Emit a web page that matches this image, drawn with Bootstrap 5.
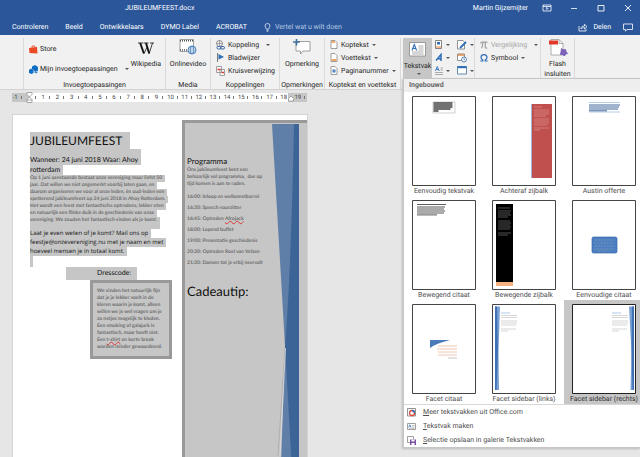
<!DOCTYPE html>
<html lang="nl">
<head>
<meta charset="utf-8">
<meta name="viewport" content="width=device-width, initial-scale=1">
<title>JUBILEUMFEEST.docx</title>
<link href="https://cdn.jsdelivr.net/npm/bootstrap@5.3.0/dist/css/bootstrap.min.css" rel="stylesheet">
<style>
  body { font-family: Roboto, "Noto Sans", sans-serif; font-size: 7px; line-height: 10px; color: #262626; background: #e6e6e6; text-rendering: geometricPrecision; }
  button { font: inherit; color: inherit; background: none; border: 0; padding: 0; line-height: 10px; text-rendering: inherit; }
  svg { display: block; flex: none; }
  .app-head { background: #2b579a; color: #fff; }
  .title-row { height: 16px; padding-right: 7px; }
  .doc-title { padding-left: 125px; }
  .user-name { margin-right: 14px; }
  .win-buttons { gap: 17px; }
  .tab-row { height: 19px; padding: 3px 7px 0 12px; }
  .tab-row a { color: #fff; text-decoration: none; }
  .tab-list { gap: 17px; }
  .tab-list a.tell { color: #b5c7e3; gap: 4px; }
  .share { gap: 5px; }
  .share-side { gap: 12px; }

  .ribbon { background: #f1f1f1; border-bottom: 1px solid #d2d2d2; height: 55px; padding-top: 3px; }
  .rgroup { border-right: 1px solid #dadada; flex: none; height: 51px; }
  .rbody { height: 42px; }
  .rlabel { display: flex; justify-content: center; height: 9px; white-space: nowrap; }
  .g-lead { width: 24px; } .g-apps { width: 142px; } .g-media { width: 45px; } .g-links { width: 69px; }
  .g-note { width: 45px; } .g-head { width: 76px; } .g-text { width: 74px; } .g-sym { width: 66px; } .g-flash { width: 34px; }
  .g-text { padding-left: 2px; } .g-text, .g-sym, .g-flash { height: 40px; }
  .rrow { height: 13px; gap: 3px; white-space: nowrap; }
  .rstack { padding-left: 5px; }
  .rapp { height: 18px; gap: 2px; white-space: nowrap; }
  .rbig { gap: 4px; }
  .rbig-flash { gap: 3px; }
  .caret::after { content: ""; display: inline-block; border: 2px solid transparent; border-top-color: #555; border-bottom: 0; margin-left: 3px; vertical-align: 1px; }
  .caret-far::after { margin-left: 7px; }
  .off { color: #a6a6a6; }
  .btn-open { background: #c6c6c6; width: 29px; height: 40px; }
  .tool-grid { padding-left: 3px; }

  .gallery.dropdown-menu { --bs-dropdown-min-width: 238px; --bs-dropdown-padding-y: 0; top: 40px; left: 2px; width: 238px; font-size: 7px; border: 1px solid #c6c6c6; border-radius: 0; color: #505050; background: #fff; box-shadow: -1px 1px 2px #bbb; }
  .gal-head { background: #eee; height: 13px; line-height: 13px; padding-left: 5px; font-size: 7px; font-weight: 700; margin: 0; color: #666; }
  .gal-grid { display: grid; grid-template-columns: 80px 80px 80px; }
  .gal-item { height: 104px; padding-top: 3px; }
  .gal-item.picked { background: #c6c6c6; color: #333; }
  .gal-item .label { display: block; line-height: 10px; white-space: nowrap; }
  .gal-item svg { margin: 0 auto; }
  .gal-foot { border-top: 1px solid #d9d9d9; background: #fff; }
  .gal-foot button { height: 14px; gap: 7px; padding-left: 3px; }
  .gal-foot u { text-underline-offset: 1px; }

  .work { padding-top: 2px; }
  .ruler { margin-left: 11px; width: 297px; height: 11px; font-size: 6px; line-height: 9px; color: #444; background: linear-gradient(#fff, #fff) 19px 1px / 258px 9px no-repeat, linear-gradient(#c6c6c6, #c6c6c6) 1px 1px / 295px 9px no-repeat; }
  .ruler span { flex: 1 0 14px; display: flex; align-items: center; }
  .ruler b { flex: none; width: 8px; font-weight: 400; display: flex; justify-content: center; }
  .ruler i { flex: none; width: 6px; height: 3px; background: linear-gradient(#777, #777) 2px 0 / 1px 3px no-repeat; }
  .ruler svg { margin: auto; }

  .sheet { margin: 11px 0 0 12px; width: 296px; background: #fff; border: 1px solid #d4d4d4; border-bottom: 0; color: #111; font-family: Lato, "Open Sans", sans-serif; }
  .sheet p, .sheet h1, .sheet h2 { margin: 0; white-space: nowrap; }
  .flow { width: 169px; padding: 17px 0 0 17px; flex: none; }
  .hl { display: block; width: fit-content; background: #c6c6c6; padding-right: 3px; }
  .flow h1 { font-size: 12px; font-weight: 400; line-height: 17px; }
  .flow h1 .hl { padding-right: 8px; }
  .sub { font-size: 7px; line-height: 10px; }
  .sub .first { padding-top: 6px; }
  .fine { font-size: 5px; line-height: 7px; font-weight: 700; color: #6b6b6b; }
  .flow .fine .hl:last-child { padding-bottom: 5px; }
  .ask { font-family: "Open Sans", sans-serif; font-size: 6px; line-height: 9px; }
  .flow .blank { height: 11px; width: 3px; padding: 0; }
  .flow .dress { margin-left: 36px; width: 71px; padding-left: 31px; font-size: 7px; line-height: 13px; }
  .framed { margin-left: 60px; width: 82px; border: 3px solid #999; background: #c6c6c6; padding: 5px 4px; }
  .side { border: 3px solid #999; border-right: 0; border-bottom: 0; background: #c6c6c6; margin-top: 5px; position: relative; }
  .side-text { padding: 33px 0 0 2px; position: relative; }
  .side h2 { font-size: 8px; font-weight: 400; line-height: 11px; }
  .side .slot { line-height: 11px; }
  .side .tip { font-size: 13px; line-height: 18px; margin-top: 13px; font-weight: 400; }
  .side-art { position: absolute; top: 1px; right: 8px; }
  .typo { text-decoration: underline wavy #d33 1px; text-decoration-skip-ink: none; text-underline-offset: 0; }
</style>
</head>
<body>
<div class="vh-100 d-flex flex-column overflow-hidden">
  <header class="app-head">
    <div class="title-row d-flex align-items-center justify-content-between">
      <div class="doc-title">JUBILEUMFEEST.docx</div>
      <div class="d-flex align-items-center">
        <span class="user-name">Martin Gijzemijter</span>
        <div class="win-buttons d-flex align-items-center">
          <button aria-label="Lint weergeven"><svg width="10" height="8" fill="none" stroke="#fff" stroke-width=".8"><path d="M1 1h8v6H1zM1 2.5h8M5 6V3.6M3.8 4.7L5 3.5l1.200 1.200"/></svg></button>
          <button aria-label="Minimaliseren"><svg width="10" height="8" stroke="#fff" stroke-width=".8"><path d="M2 4.500h6"/></svg></button>
          <button aria-label="Maximaliseren"><svg width="10" height="8" fill="none" stroke="#fff" stroke-width=".9"><path d="M2 1.500h6v5.500H2z"/></svg></button>
          <button aria-label="Sluiten"><svg width="10" height="8" stroke="#fff" stroke-width=".9"><path d="M2 1l6 6M8 1L2 7"/></svg></button>
        </div>
      </div>
    </div>
    <nav class="tab-row d-flex align-items-center justify-content-between">
      <div class="tab-list d-flex align-items-center">
        <a href="#">Controleren</a><a href="#">Beeld</a><a href="#">Ontwikkelaars</a><a href="#">DYMO Label</a><a href="#">ACROBAT</a>
        <a href="#" class="tell d-flex align-items-center"><svg width="7" height="9" fill="none" stroke="#dde6f4" stroke-width=".8"><path d="M2.300 6C2.300 4.800 1 4.400 1 3a2.500 2.500 0 0 1 5 0C6 4.400 4.700 4.800 4.700 6zM2.300 7.200h2.400M2.800 8.400h1.400"/></svg>Vertel wat u wilt doen</a>
      </div>
      <div class="share-side d-flex align-items-center">
        <a href="#" class="share d-flex align-items-center"><svg width="10" height="9" fill="none" stroke="#fff" stroke-width=".8"><path d="M1 3v5h7V6M3 6c0-2 1-3 3.500-3V1.300L9 3.700 6.500 6V4.600C5 4.600 4 5 3 6z"/></svg>Delen</a>
        <button aria-label="Opmerkingen"><svg width="10" height="9" fill="none" stroke="#fff" stroke-width=".8"><path d="M.5 1h9v5.500H4L2.500 8.200V6.500h-2z"/></svg></button>
      </div>
    </nav>
  </header>

  <section class="ribbon d-flex">
    <div class="rgroup g-lead"></div>
    <div class="rgroup g-apps">
      <div class="rbody d-flex justify-content-between pe-1">
        <div class="rstack pt-1">
          <button class="rapp d-flex align-items-center pb-1"><svg width="9" height="9"><path d="M0 3l8-1 .5 6.500L.500 8z" fill="#eb4a25"/><path d="M3 3V1.500Q4.500 0 6 1.500V3" fill="none" stroke="#eb4a25"/></svg>Store</button>
          <button class="rapp d-flex align-items-center"><svg width="9" height="9"><path d="M3 1.500L6 0l3 2v3.500L6.500 7 5 5.500 3 4z" fill="#0f6fc6"/><path d="M0 5l2-1.500L4.500 5v3L2.500 9 0 8z" fill="#0f6fc6"/><path d="M5.500 7l1.500 1 1.500-1" stroke="#0f6fc6" fill="none"/></svg><span class="caret caret-far">Mijn invoegtoepassingen</span></button>
        </div>
        <button class="rbig d-flex flex-column align-items-center pt-1"><svg width="16" height="13" fill="none" stroke="#111"><path d="M0 1h5M5.500 1h5M12 1h4" stroke-width=".8"/><path d="M2.200 1l3.700 10.500M8 1l3.200 10.500" stroke-width="1.900"/><path d="M6 11.500L9 5M11.200 11.500L14.500 1" stroke-width=".8"/></svg>Wikipedia</button>
      </div>
      <div class="rlabel">Invoegtoepassingen</div>
    </div>
    <div class="rgroup g-media">
      <div class="rbody d-flex justify-content-center">
        <button class="rbig d-flex flex-column align-items-center"><svg width="18" height="17"><path d="M1 1.500h13.500v12H1z" fill="#fff" stroke="#888" stroke-width=".8"/><path d="M1 2.800h13.500M1 12h8" stroke="#555" stroke-width="1.500" stroke-dasharray="1 1"/><circle cx="13" cy="12" r="4" fill="#fff" stroke="#3b78b8" stroke-width=".9"/><ellipse cx="13" cy="12" rx="1.700" ry="4" fill="none" stroke="#3b78b8" stroke-width=".7"/><path d="M9 12h8M9.600 10h6.800M9.600 14h6.800" stroke="#3b78b8" stroke-width=".6"/></svg>Onlinevideo</button>
      </div>
      <div class="rlabel">Media</div>
    </div>
    <div class="rgroup g-links">
      <div class="rbody rstack">
        <button class="rrow d-flex align-items-center"><svg width="9" height="10" fill="none"><circle cx="3.500" cy="3.500" r="3" stroke="#777" stroke-width=".8"/><path d="M.5 3.500h6M3.500.5v6" stroke="#777" stroke-width=".6"/><rect x="1" y="6.500" width="4" height="2.500" rx="1.200" stroke="#2f5f9f" fill="#fff"/><rect x="4.500" y="6.500" width="4" height="2.500" rx="1.200" stroke="#2f5f9f"/></svg><span class="caret caret-far">Koppeling</span></button>
        <button class="rrow d-flex align-items-center"><svg width="9" height="9"><path d="M1.500 0v9" stroke="#777"/><path d="M2.500 1L8 4 2.500 6.500z" fill="#2f6db5"/></svg>Bladwijzer</button>
        <button class="rrow d-flex align-items-center"><svg width="9" height="10" fill="#fff" stroke="#888" stroke-width=".8"><path d="M.5.5h5v6h-5zM4 3.500h4.500v6H4z"/><path d="M1.500 3.500h3M5.500 6.500H8" stroke="#d8412f" stroke-width="1.500"/></svg>Kruisverwijzing</button>
      </div>
      <div class="rlabel">Koppelingen</div>
    </div>
    <div class="rgroup g-note">
      <div class="rbody d-flex justify-content-center">
        <button class="rbig d-flex flex-column align-items-center"><svg width="18" height="17"><path d="M3 3.500h14v9.500h-7L7.500 16v-3H3z" fill="#fff" stroke="#8a8a8a" stroke-width=".8"/><path d="M3.500 1v6.500M0 4h7" stroke="#41719c" stroke-width="1.600"/></svg>Opmerking</button>
      </div>
      <div class="rlabel">Opmerkingen</div>
    </div>
    <div class="rgroup g-head">
      <div class="rbody rstack">
        <button class="rrow d-flex align-items-center"><svg width="8" height="9"><path d="M1 .5h4l2 2v6H1z" fill="#fff" stroke="#888" stroke-width=".8"/><path d="M1.500 1h3.500v2H1.500z" fill="#f0a868"/></svg><span class="caret">Koptekst</span></button>
        <button class="rrow d-flex align-items-center"><svg width="8" height="9"><path d="M1 .5h4l2 2v6H1z" fill="#fff" stroke="#888" stroke-width=".8"/><path d="M1.500 6h5v2h-5z" fill="#f0a868"/></svg><span class="caret">Voettekst</span></button>
        <button class="rrow d-flex align-items-center"><svg width="8" height="9"><path d="M1 .5h4l2 2v6H1z" fill="#fff" stroke="#888" stroke-width=".8"/><path d="M3.300 3.300v3.400M4.700 3.300v3.400M2.300 4.300h3.400M2.300 5.700h3.400" stroke="#2f6db5" stroke-width=".7"/></svg><span class="caret">Paginanummer</span></button>
      </div>
      <div class="rlabel">Koptekst en voettekst</div>
    </div>
    <div class="rgroup g-text dropdown d-flex">
      <button class="btn-open d-flex flex-column align-items-center pt-1" aria-expanded="true"><svg width="17" height="15"><path d="M.5.500h16v13.500H.5z" fill="#fff" stroke="#888" stroke-width=".8"/><path d="M3 8.500L5.300 2.500 7.600 8.500M3.800 6.500h3" fill="none" stroke="#2f6db5" stroke-width="1.100"/><path d="M9.500 4h5M9.500 6h5M9.500 8h5M3 10h11.500M3 12h11.500" stroke="#999" stroke-width=".8"/></svg><span class="pt-1">Tekstvak</span><span class="caret lh-1"></span></button>
      <div class="tool-grid">
        <div class="rrow d-flex align-items-center">
          <button class="caret d-flex align-items-center" aria-label="Snelonderdelen"><svg width="8" height="9"><path d="M.5.500h6v8h-6z" fill="#fff" stroke="#777" stroke-width=".9"/><path d="M2 2h3v2.500H2z" fill="#2f6db5"/><path d="M1 7h5" stroke="#f0a868" stroke-width="1.500"/></svg></button>
          <button class="caret d-flex align-items-center ms-1" aria-label="Handtekeningregel"><svg width="10" height="10"><path d="M.5.500H6l1.500 2v6.500h-7z" fill="#fff" stroke="#777" stroke-width=".8"/><path d="M3 8L9 2" stroke="#2f6db5" stroke-width="1.800"/></svg></button>
        </div>
        <div class="rrow d-flex align-items-center">
          <button class="caret d-flex align-items-center" aria-label="WordArt"><svg width="8" height="9" fill="none" stroke="#2f6db5" stroke-width="1.500"><path d="M1 7.500L6 1.500V8M2.500 5.800H6"/></svg></button>
          <button class="ms-1" aria-label="Datum en tijd"><svg width="10" height="10"><path d="M.5 1h7v6.500h-7z" fill="#fff" stroke="#777" stroke-width=".8"/><path d="M.5 2h7" stroke="#e08a4a" stroke-width="1.500"/><circle cx="7" cy="6.500" r="2.500" fill="#fff" stroke="#2f6db5" stroke-width=".8"/><path d="M7 5v1.700h1.200" fill="none" stroke="#555" stroke-width=".6"/></svg></button>
        </div>
        <div class="rrow d-flex align-items-center">
          <button class="caret d-flex align-items-center" aria-label="Initiaal"><svg width="8" height="10" fill="none"><path d="M.5 5L2.300.5 4.200 5M1.200 3.500h2.200" stroke="#2f6db5" stroke-width=".9"/><path d="M5.500 2H8M5.500 4H8M0 6.500h8M0 8.500h8" stroke="#999" stroke-width=".8"/></svg></button>
          <button class="caret d-flex align-items-center ms-1" aria-label="Object"><svg width="10" height="9"><path d="M.5.500h9v7.500h-9z" fill="#fff" stroke="#41719c" stroke-width=".8"/><path d="M.5 1.200h9" stroke="#2f6db5" stroke-width="2"/></svg></button>
        </div>
      </div>
      <div class="gallery dropdown-menu show">
        <h2 class="gal-head">Ingebouwd</h2>
        <div class="gal-grid">
          <button class="gal-item"><svg width="64" height="90"><path d="M.5.500h63v89H.5z" fill="#fff" stroke="#444"/><path d="M21 6h22v11H21z" fill="#fff" stroke="#bbb" stroke-width=".7"/><path d="M21.500 7h19M21.500 9h19M21.500 11h19M21.500 13h17M21.500 15h5" stroke="#444" stroke-width="1.300"/></svg><span class="label">Eenvoudig tekstvak</span></button>
          <button class="gal-item"><svg width="64" height="90"><path d="M.5.500h63v89H.5z" fill="#fff" stroke="#444"/><path d="M40 8h20v74H40z" fill="#c0504d"/><path d="M39.500 8v74" stroke="#9db8dd"/><path d="M42 11h8M42 14h15M42 16h15M42 18h15M42 20h12M42 23h15M42 25h15M42 27h15M42 29h13M42 32h15M42 34h6" stroke="#d98a88" stroke-width=".8"/></svg><span class="label">Achteraf zijbalk</span></button>
          <button class="gal-item"><svg width="64" height="90"><path d="M.5.500h63v89H.5z" fill="#fff" stroke="#444"/><path d="M17 6.500h31M17 16h31" stroke="#b6cdea"/><path d="M17 9h31M17 11h30M17 13h29M17 14.800h18" stroke="#41689c" stroke-width="1"/></svg><span class="label">Austin offerte</span></button>
          <button class="gal-item"><svg width="64" height="90"><path d="M.5.500h63v89H.5z" fill="#fff" stroke="#444"/><path d="M5 4.500h29" stroke="#333" stroke-width=".8"/><path d="M5 7h28M5 9h27M5 11h28M5 13h27M5 14.900h20" stroke="#444" stroke-width=".9"/></svg><span class="label">Bewegend citaat</span></button>
          <button class="gal-item"><svg width="64" height="90"><path d="M.5.500h63v89H.5z" fill="#fff" stroke="#444"/><path d="M4 4h17v78H4z"/><path d="M4 82h17v4H4z" fill="#f6b183"/><path d="M6 8h12M6 11h13M6 13h12M6 15h13M6 17h10M6 21h12M6 23h13M6 25h12M6 27h13M6 29h12M6 33h13M6 35h10" stroke="#666" stroke-width=".8"/></svg><span class="label">Bewegende zijbalk</span></button>
          <button class="gal-item"><svg width="64" height="90"><path d="M.5.500h63v89H.5z" fill="#fff" stroke="#444"/><rect x="20" y="37" width="25" height="16" rx="1.500" fill="#4a7fc4" stroke="#3a68a8" stroke-width=".7"/><path d="M23 40h19M22 43h21M23 46h19M22 49h21M26 51h12" stroke="#8e9cab" stroke-width=".7" stroke-dasharray="2 1"/></svg><span class="label">Eenvoudige citaat</span></button>
          <button class="gal-item"><svg width="64" height="90"><path d="M.5.500h63v89H.5z" fill="#fff" stroke="#444"/><path d="M18 36h20Q25 39 18 44z" fill="#4a7ab8"/><path d="M26 42h19M25 45h20M26 48h19M26 51h19" stroke="#eec0aa" stroke-width=".9"/><path d="M36 54h9" stroke="#aaa" stroke-width=".7"/></svg><span class="label">Facet citaat</span></button>
          <button class="gal-item"><svg width="64" height="90"><path d="M.5.500h63v89H.5z" fill="#fff" stroke="#444"/><path d="M3 2.500h5L6.500 48 7 86H3z" fill="#79a0d4"/><path d="M3 2.500h2L6 48 4.500 86H3z" fill="#3f72b5"/><path d="M9 9h9" stroke="#9dbbe0" stroke-width=".8"/><path d="M9 11.500h16M9 13.500h16M9 17h16M9 19h16M9 21h15M9 25h15M9 27h7" stroke="#ccc" stroke-width=".8"/></svg><span class="label">Facet sidebar (links)</span></button>
          <button class="gal-item picked"><svg width="64" height="90"><path d="M.5.500h63v89H.5z" fill="#fff" stroke="#222"/><path d="M62 2.500h-5L59.500 48 58.500 86H62z" fill="#79a0d4"/><path d="M62 2.500h-2L59.500 48l1 38H62z" fill="#3f72b5"/><path d="M40 9h9" stroke="#9dbbe0" stroke-width=".8"/><path d="M40 11.500h16M40 13.500h16M40 17h16M40 19h16M40 21h15M40 25h15M40 27h7" stroke="#ccc" stroke-width=".8"/></svg><span class="label">Facet sidebar (rechts)</span></button>
        </div>
        <div class="gal-foot">
          <button class="d-flex align-items-center"><svg width="9" height="9"><path d="M.5.500h8v7.500h-8z" fill="#fff" stroke="#777" stroke-width=".8"/><circle cx="5" cy="5" r="2.500" fill="none" stroke="#d8412f" stroke-width="1.300"/><path d="M5 2.500A2.500 2.500 0 0 1 7.500 5" fill="none" stroke="#2f6db5" stroke-width="1.300"/></svg><span><u>M</u>eer tekstvakken uit Office.com</span></button>
          <button class="d-flex align-items-center"><svg width="9" height="9"><path d="M.5 1.500h8v6h-8z" fill="#fff" stroke="#888" stroke-width=".8"/><path d="M1.700 5.500L2.900 2.800 4 5.500" fill="none" stroke="#2f6db5" stroke-width=".8"/><path d="M5 3.500h2.500M5 5h2.500M2 6.300h5.500" stroke="#999" stroke-width=".6"/></svg><span><u>T</u>ekstvak maken</span></button>
          <button class="d-flex align-items-center"><svg width="9" height="9"><path d="M.5.500h6v6h-6z" fill="#fff" stroke="#888" stroke-width=".8"/><path d="M3 3.500h6V9H3z" fill="#7b4fa3"/><path d="M4.500 3.500h3v2h-3zM4.500 7h3v2h-3z" fill="#fff"/></svg><span><u>S</u>electie opslaan in galerie Tekstvakken</span></button>
        </div>
      </div>
    </div>
    <div class="rgroup g-sym">
      <div class="rstack">
        <button class="rrow off d-flex align-items-center" disabled><svg width="8" height="8" fill="none" stroke="#a0a0a0" stroke-width="1.200"><path d="M.5 2.500Q1 1.200 2 1.200h5.500M2.800 1.200Q2.800 5 1.500 7.300M5.300 1.200V6q0 1.500 2 1"/></svg><span class="caret caret-far">Vergelijking</span></button>
        <button class="rrow d-flex align-items-center"><svg width="8" height="8" fill="none" stroke="#2f6db5" stroke-width="1.200"><path d="M.3 7h2.500V6Q1 5 1 3.500a3 2.800 0 0 1 6 0Q7 5 5.200 6v1h2.500"/></svg><span class="caret">Symbool</span></button>
      </div>
    </div>
    <div class="rgroup g-flash d-flex justify-content-center">
      <button class="rbig-flash d-flex flex-column align-items-center"><svg width="20" height="18"><path d="M3 1.500h8l4 4V17H3z" fill="#fff" stroke="#999" stroke-width=".8"/><path d="M11 1.500v4h4" fill="none" stroke="#999" stroke-width=".8"/><path d="M1 2.500h9v4H1z" fill="#e03a2c"/><path d="M13.500 10.500l1.500 1.500 2.500-.5.500 2 1.500 2-2 .5-1 2-2-1.500h-2l.5-2.500z" fill="#7b62b8" stroke="#7b62b8"/></svg><span>Flash<br>insluiten</span></button>
    </div>
  </section>

  <main class="work flex-grow-1 overflow-hidden">
    <div class="ruler d-flex align-items-center">
      <span><b>-1</b><i></i></span><span><b><svg width="7" height="11" fill="#fff" stroke="#888" stroke-width=".7"><path d="M1 .5h5v2L3.500 5 1 2.500zM1 7.500L3.500 5 6 7.500v3H1zM1 8h5"/></svg></b><i></i></span><span><b>1</b><i></i></span><span><b>2</b><i></i></span><span><b>3</b><i></i></span><span><b>4</b><i></i></span><span><b>5</b><i></i></span><span><b>6</b><i></i></span><span><b>7</b><i></i></span><span><b>8</b><i></i></span><span><b>9</b><i></i></span><span><b>10</b><i></i></span><span><b>11</b><i></i></span><span><b>12</b><i></i></span><span><b>13</b><i></i></span><span><b>14</b><i></i></span><span><b>15</b><i></i></span><span><b>16</b><i></i></span><span><b>17</b><i></i></span><span><b>18</b><svg width="6" height="9" fill="#fff" stroke="#888" stroke-width=".7"><path d="M.5 8V5.500L3 3l2.500 2.500V8z"/></svg></span><span><b>19</b><i></i></span>
    </div>
    <article class="sheet d-flex h-100">
      <div class="flow">
        <h1><span class="hl">JUBILEUMFEEST</span></h1>
        <p class="sub"><span class="hl first">Wanneer: 24 juni 2018 Waar: Ahoy</span><span class="hl">rotterdam</span></p>
        <p class="fine"><span class="hl">Op 1 juni aanstaande bestaat onze vereniging maar liefst 50</span><span class="hl">jaar. Dat willen we niet ongemerkt voorbij laten gaan, en</span><span class="hl">daarom organiseren we voor al onze leden, én oud-leden een</span><span class="hl">spetterend jubileumfeest op 24 juni 2018 in Ahoy Rotterdam.</span><span class="hl">Het wordt een feest met fantastische optredens, lekker eten</span><span class="hl">en natuurlijk een flinke duik in de geschiedenis van onze</span><span class="hl">vereniging. We zouden het fantastisch vinden als je komt.</span></p>
        <p class="ask"><span class="hl">Laat je even weten of je komt? Mail ons op</span><span class="hl">feestje@onzevereniging.nu met je naam en met</span><span class="hl">hoeveel mensen je in totaal komt.</span></p>
        <div class="hl blank"></div>
        <p class="hl dress">Dresscode:</p>
        <div class="framed"><p class="fine">We vinden het natuurlijk fijn<br>dat je je lekker voelt in de<br>kleren waarin je komt, alleen<br>willen we je wel vragen om je<br>zo netjes mogelijk te kleden.<br>Een smoking of galajurk is<br>fantastisch, maar hoeft niet.<br>Een <span class="typo">t-shirt</span> en korte broek<br>worden minder gewaardeerd.</p></div>
      </div>
      <aside class="side flex-grow-1">
        <svg class="side-art" width="28" height="400"><path d="M1 0H28V400H8L14 222z" fill="#5f7fa8"/><path d="M23 0H28V400H24L14 222Q20 150 23 0Z" fill="#3d6496"/><path d="M14 224L7 332" stroke="#aaa" stroke-width=".8"/><path d="M14.500 224L9 332" stroke="#ddd" stroke-width=".8"/></svg>
        <div class="side-text">
          <h2>Programma</h2>
          <p class="fine">Ons jubileumfeest kent een<br>behoorlijk vol programma,&nbsp; dus op<br>tijd komen is aan te raden.</p>
          <p class="fine slot pt-1">16:00: Inloop en welkomstborrel</p>
          <p class="fine slot">16:30: Speech voorzitter</p>
          <p class="fine slot">16:45: Optreden <span class="typo">Afrojack</span></p>
          <p class="fine slot">18:00: Lopend buffet</p>
          <p class="fine slot">19:00: Presentatie geschiedenis</p>
          <p class="fine slot">20:30: Optreden Roel van Velzen</p>
          <p class="fine slot">21:30: Dansen tot je erbij neervalt</p>
          <p class="tip">Cadeautip:</p>
        </div>
      </aside>
    </article>
  </main>
</div>
<script src="https://cdn.jsdelivr.net/npm/bootstrap@5.3.0/dist/js/bootstrap.bundle.min.js"></script>
</body>
</html>
